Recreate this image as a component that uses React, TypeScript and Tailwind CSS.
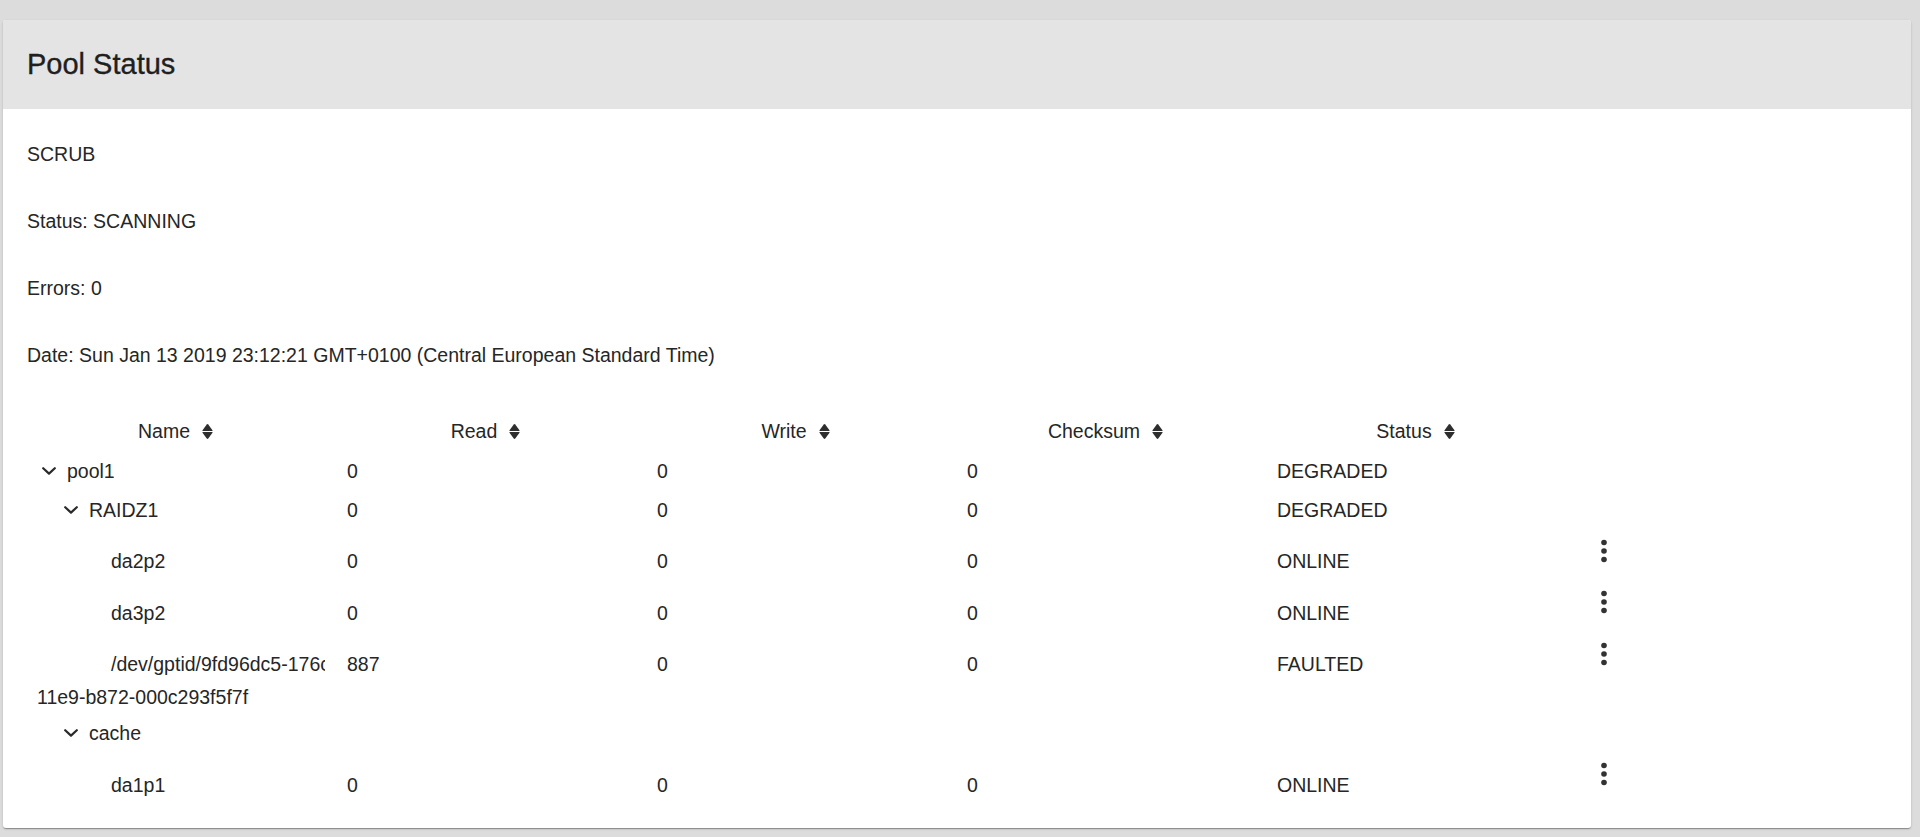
import { FC } from "react";

type VdevRow = {
  name: string;
  lines?: string[];
  level: 0 | 1 | 2;
  expandable?: boolean;
  read?: string;
  write?: string;
  checksum?: string;
  status?: string;
  actions?: boolean;
};

const scrub = [
  "SCRUB",
  "Status: SCANNING",
  "Errors: 0",
  "Date: Sun Jan 13 2019 23:12:21 GMT+0100 (Central European Standard Time)",
];

const columns = ["Name", "Read", "Write", "Checksum", "Status"];

const rows: VdevRow[] = [
  { name: "pool1", level: 0, expandable: true, read: "0", write: "0", checksum: "0", status: "DEGRADED" },
  { name: "RAIDZ1", level: 1, expandable: true, read: "0", write: "0", checksum: "0", status: "DEGRADED" },
  { name: "da2p2", level: 2, read: "0", write: "0", checksum: "0", status: "ONLINE", actions: true },
  { name: "da3p2", level: 2, read: "0", write: "0", checksum: "0", status: "ONLINE", actions: true },
  {
    name: "/dev/gptid/9fd96dc5-176c-11e9-b872-000c293f5f7f",
    lines: ["/dev/gptid/9fd96dc5-176c-", "11e9-b872-000c293f5f7f"],
    level: 2,
    read: "887",
    write: "0",
    checksum: "0",
    status: "FAULTED",
    actions: true,
  },
  { name: "cache", level: 1, expandable: true },
  { name: "da1p1", level: 2, read: "0", write: "0", checksum: "0", status: "ONLINE", actions: true },
];

const indent = ["w-0", "w-[22px]", "w-[44px]"];

const SortIcon = () => (
  <svg width="13" height="17" viewBox="0 0 12 16" className="shrink-0">
    <path d="M1.3 6.8 L5.3 1.3 Q6 0.5 6.7 1.3 L10.7 6.8 Q11.1 7.5 10.3 7.5 L1.7 7.5 Q0.9 7.5 1.3 6.8 Z" fill="#2e2e2e" />
    <path d="M1.3 9.2 L5.3 14.7 Q6 15.5 6.7 14.7 L10.7 9.2 Q11.1 8.5 10.3 8.5 L1.7 8.5 Q0.9 8.5 1.3 9.2 Z" fill="#2e2e2e" />
  </svg>
);

const Chevron = () => (
  <svg width="14" height="8" viewBox="0 0 14 8" className="ml-[5px] shrink-0">
    <polyline points="1.2,1.2 7,6.6 12.8,1.2" fill="none" stroke="#2a2a2a" strokeWidth="2.2" strokeLinecap="round" strokeLinejoin="round" />
  </svg>
);

const KebabButton = () => (
  <button className="flex h-[40px] w-[40px] items-center justify-center rounded-full">
    <svg width="40" height="40" viewBox="0 0 40 40">
      <circle cx="20" cy="11.5" r="2.8" fill="#333" />
      <circle cx="20" cy="20" r="2.8" fill="#333" />
      <circle cx="20" cy="28.5" r="2.8" fill="#333" />
    </svg>
  </button>
);

const NameCell: FC<{ row: VdevRow; pad: string }> = ({ row, pad }) => {
  if (row.expandable) {
    return (
      <div className={`flex items-center overflow-hidden whitespace-nowrap px-[10px] leading-[30px] ${pad}`}>
        <span className={`inline-block shrink-0 ${indent[row.level]}`} />
        <span className="flex w-[30px] shrink-0 items-center">
          <Chevron />
        </span>
        <span>{row.name}</span>
      </div>
    );
  }

  // long device paths wrap back to the cell edge and get cut at the column
  const [first, ...rest] = row.lines ?? [row.name];
  const wrapped = rest.length > 0;
  return (
    <div className={`pl-[10px] pr-[12px] leading-[30px] ${wrapped ? "pt-[17px] pb-[2px]" : pad}`}>
      <div className="overflow-hidden whitespace-nowrap">
        <span className="inline-block w-[74px]" />
        {first}
        {rest.map((line) => (
          <div key={line} className="mt-[2.5px]">
            {line}
          </div>
        ))}
      </div>
    </div>
  );
};

const PoolRow: FC<{ row: VdevRow }> = ({ row }) => {
  const pad = row.actions ? "pt-[17px] pb-[4.5px]" : "py-[4.5px]";
  const cell = `px-[10px] leading-[30px] ${pad}`;

  return (
    <div className="grid grid-cols-6">
      <NameCell row={row} pad={pad} />
      <div className={cell}>{row.read}</div>
      <div className={cell}>{row.write}</div>
      <div className={cell}>{row.checksum}</div>
      <div className={cell}>{row.status}</div>
      <div className="pl-[7px] pt-[1.5px]">{row.actions && <KebabButton />}</div>
    </div>
  );
};

const App = () => {
  return (
    <div className="min-h-screen bg-[#dcdcdc] pl-[3px] pr-[9px] pt-[20px] font-['Liberation_Sans',Arial,sans-serif] text-[19.5px] text-[#262626]">
      <div className="overflow-hidden rounded-[3px] bg-white shadow-[0_2px_1px_-1px_rgba(0,0,0,0.2),0_1px_1px_0_rgba(0,0,0,0.14),0_1px_3px_0_rgba(0,0,0,0.12)]">
        <div className="flex h-[89px] items-center bg-[#e4e4e4] px-[24px]">
          <h1 className="text-[29px] text-[#1f1f1f] [-webkit-text-stroke:0.35px_#1f1f1f]">Pool Status</h1>
        </div>

        <div className="flex flex-col gap-[44px] px-[24px] pb-[24px] pt-[34px]">
          {scrub.map((line) => (
            <p key={line} className="leading-[23px]">
              {line}
            </p>
          ))}

          <div>
            <div className="grid h-[40px] grid-cols-6">
              {columns.map((col) => (
                <div key={col} className="flex items-center justify-center gap-[11px] pr-[12px] leading-[23px]">
                  <span>{col}</span>
                  <SortIcon />
                </div>
              ))}
              <div />
            </div>
            {rows.map((row) => (
              <PoolRow key={row.name} row={row} />
            ))}
          </div>
        </div>
      </div>
    </div>
  );
};

export default App;
